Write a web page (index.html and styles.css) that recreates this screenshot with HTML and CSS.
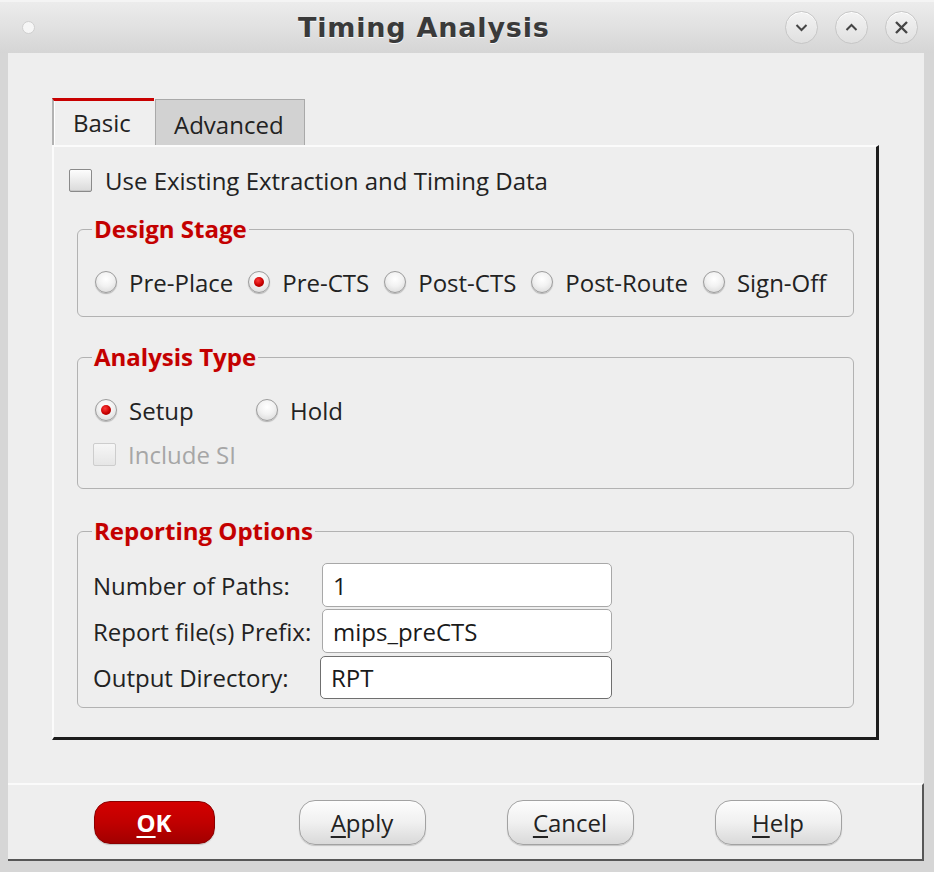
FILE: index.html
```html
<!DOCTYPE html>
<html>
<head>
<meta charset="utf-8">
<link rel="stylesheet" href="styles.css">
</head>
<body>
<div class="window">
  <header class="titlebar">
    <span class="dot"></span>
    <h1 class="title">Timing Analysis</h1>
    <div class="controls">
      <span class="ctl"><svg width="33" height="33" viewBox="0 0 33 33"><path d="M11.5 14 L16.5 19 L21.5 14" fill="none" stroke="#454545" stroke-width="2"/></svg></span>
      <span class="ctl"><svg width="33" height="33" viewBox="0 0 33 33"><path d="M11.5 19 L16.5 14 L21.5 19" fill="none" stroke="#454545" stroke-width="2"/></svg></span>
      <span class="ctl"><svg width="33" height="33" viewBox="0 0 33 33"><path d="M11 11 L22 22 M22 11 L11 22" fill="none" stroke="#454545" stroke-width="2.4"/></svg></span>
    </div>
  </header>

  <main class="client">
    <div class="tabs">
      <div class="tab active">Basic</div>
      <div class="tab">Advanced</div>
    </div>
    <section class="panel">
      <div class="check-row">
        <span class="checkbox"></span>
        <span>Use Existing Extraction and Timing Data</span>
      </div>

      <fieldset class="group stage">
        <legend>Design Stage</legend>
        <div class="radio-row">
          <span class="opt"><span class="radio"></span>Pre-Place</span>
          <span class="opt"><span class="radio on"></span>Pre-CTS</span>
          <span class="opt"><span class="radio"></span>Post-CTS</span>
          <span class="opt"><span class="radio"></span>Post-Route</span>
          <span class="opt"><span class="radio"></span>Sign-Off</span>
        </div>
      </fieldset>

      <fieldset class="group analysis">
        <legend>Analysis Type</legend>
        <div class="radio-row">
          <span class="opt wide"><span class="radio on"></span>Setup</span>
          <span class="opt"><span class="radio"></span>Hold</span>
        </div>
        <div class="check-row disabled">
          <span class="checkbox"></span>
          <span>Include SI</span>
        </div>
      </fieldset>

      <fieldset class="group reporting">
        <legend>Reporting Options</legend>
        <div class="form">
          <span class="lbl">Number of Paths:</span>
          <span class="field">1</span>
          <span class="lbl">Report file(s) Prefix:</span>
          <span class="field">mips_preCTS</span>
          <span class="lbl">Output Directory:</span>
          <span class="field focus">RPT</span>
        </div>
      </fieldset>
    </section>
  </main>

  <footer class="buttonbar">
    <span class="btn primary"><u>O</u>K</span>
    <span class="btn"><u>A</u>pply</span>
    <span class="btn"><u>C</u>ancel</span>
    <span class="btn"><u>H</u>elp</span>
  </footer>
</div>
</body>
</html>
```

FILE: styles.css
```css
* { box-sizing: border-box; }

body {
  margin: 0;
  background: #d6d6d6;
  font-family: "Open Sans", "Noto Sans", sans-serif;
  font-size: 24px;
  color: #222;
}

.window {
  width: 934px;
  height: 872px;
  display: flex;
  flex-direction: column;
  background: #d6d6d6;
}

/* ---------- title bar ---------- */
.titlebar {
  height: 53px;
  flex: none;
  display: flex;
  align-items: center;
  padding: 0 16px 0 22px;
  border-top: 2px solid #f4f4f4;
  background: linear-gradient(#ececec, #e2e2e2 45%, #d5d5d5);
}

.dot {
  width: 13px;
  height: 13px;
  border-radius: 50%;
  background: #f6f6f6;
  border: 1px solid #cfcfcf;
  flex: none;
}

.title {
  margin: 0 0 0 263px;
  font-family: "DejaVu Sans", sans-serif;
  font-weight: 700;
  font-size: 27px;
  letter-spacing: 0.8px;
  color: #3a3a3a;
  text-shadow: 0 1px 0 #f8f8f8;
}

.controls {
  margin-left: auto;
  display: flex;
  gap: 17px;
}

.ctl {
  width: 33px;
  height: 33px;
  border-radius: 50%;
  border: 1.5px solid #c6c6c6;
  background: linear-gradient(#f3f3f3, #e0e0e0);
  box-shadow: inset 0 1px 0 #fff;
  display: flex;
  align-items: center;
  justify-content: center;
}
.ctl svg { display: block; margin: -1.5px; }

/* ---------- client ---------- */
.client {
  flex: none;
  height: 730px;
  margin: 0 10px 0 8px;
  background: #eeeeee;
  padding: 45px 0 0 44px;
}

.tabs {
  display: flex;
  align-items: flex-end;
  height: 47px;
}

.tab {
  height: 46px;
  width: 150px;
  padding: 10px 0 0 18px;
  background: #d2d2d2;
  border: 1px solid #a9a9a9;
  border-bottom: none;
  margin-left: 1px;
  line-height: 30px;
}

.tab.active {
  width: 102px;
  height: 47px;
  margin-left: 0;
  padding: 7px 0 0 19px;
  background: #efefef;
  border: none;
  border-top: 3px solid #c80000;
  border-left: 2px solid #b2b2b2;
  box-shadow: inset 1px 0 0 #fff;
}

.panel {
  width: 827px;
  height: 595px;
  border-top: 2px solid #fbfbfb;
  border-left: 2px solid #fbfbfb;
  border-right: 3px solid #1c1c1c;
  border-bottom: 3px solid #1c1c1c;
  padding-top: 18px;
}

.check-row {
  display: flex;
  align-items: center;
  height: 30px;
  margin-left: 15px;
}

.checkbox {
  width: 23px;
  height: 23px;
  flex: none;
  margin-right: 13px;
  border: 1px solid #8a8a8a;
  border-radius: 2px;
  background: linear-gradient(#fdfdfd, #dadada);
  box-shadow: inset 0 -1px 0 #c8c8c8;
}

.check-row.disabled { margin-left: 0; color: #a6a6a6; }
.check-row.disabled .checkbox {
  border-color: #cdcdcd;
  background: linear-gradient(#f6f6f6, #e6e6e6);
  box-shadow: none;
  margin-right: 12px;
}

/* ---------- groups ---------- */
.group {
  margin: 22px 22px 0 23px;
  border: 1px solid #b2b2b2;
  border-radius: 6px;
  padding: 26px 16px 19px 15px;
  min-width: 0;
}

.group + .group { margin-top: 28px; }
.group.reporting { margin-top: 30px; padding-top: 20px; padding-bottom: 8px; }

.group legend {
  margin-left: -1px;
  padding: 0 2px;
  font-weight: 700;
  font-size: 24px;
  line-height: 24px;
  color: #c30000;
  text-shadow: 0 0 1px rgba(255, 180, 180, 0.6);
}

.radio-row {
  display: flex;
  align-items: center;
  height: 30px;
  gap: 15px;
  padding-left: 2px;
}

.opt {
  display: flex;
  align-items: center;
  white-space: nowrap;
}

.opt.wide { width: 146px; }

.radio {
  position: relative;
  width: 22px;
  height: 22px;
  flex: none;
  margin-right: 12px;
  border-radius: 50%;
  border: 1px solid #9c9c9c;
  background: radial-gradient(circle at 50% 35%, #ffffff 0%, #f2f2f2 45%, #d4d4d4 100%);
  box-shadow: 0 1px 1px rgba(0, 0, 0, 0.25);
}

.radio.on::after {
  content: "";
  position: absolute;
  left: 5px;
  top: 5px;
  width: 10px;
  height: 10px;
  border-radius: 50%;
  background: radial-gradient(circle at 40% 35%, #ff3a3a 0%, #c80000 55%, #8c0000 100%);
}

.analysis .check-row { margin-top: 14px; }

.form {
  display: grid;
  grid-template-columns: 229px 290px;
  grid-auto-rows: 44px;
  row-gap: 2px;
  align-items: center;
}

.lbl { white-space: nowrap; }

.field {
  height: 44px;
  display: flex;
  align-items: center;
  padding-left: 10px;
  background: #fff;
  border: 1px solid #a8a8a8;
  border-radius: 5px;
  color: #1a1a1a;
}

.field.focus {
  margin-left: -2px;
  border: 1.5px solid #6f6f6f;
  height: 43px;
}

/* ---------- button bar ---------- */
.buttonbar {
  flex: none;
  height: 78px;
  margin: 0 10px 0 8px;
  background: #eeeeee;
  border-top: 2px solid #fafafa;
  border-right: 2px solid #575757;
  border-bottom: 2px solid #575757;
  display: grid;
  grid-template-columns: repeat(4, 208px);
  justify-items: center;
  align-items: center;
  padding-left: 42px;
}

.btn {
  width: 127px;
  height: 45px;
  border-radius: 16px;
  border: 1px solid #a2a2a2;
  background: linear-gradient(#fdfdfd, #f0f0f0 50%, #d9d9d9);
  box-shadow: 0 1px 1px rgba(0, 0, 0, 0.18);
  display: flex;
  align-items: center;
  justify-content: center;
  color: #222;
}

.btn u { text-underline-offset: 4px; text-decoration-thickness: 2px; }

.btn.primary {
  width: 121px;
  height: 43px;
  color: #fff;
  font-weight: 700;
  border-color: #8c0000;
  background: linear-gradient(#d40000, #c00000 50%, #a20000);
}
```
